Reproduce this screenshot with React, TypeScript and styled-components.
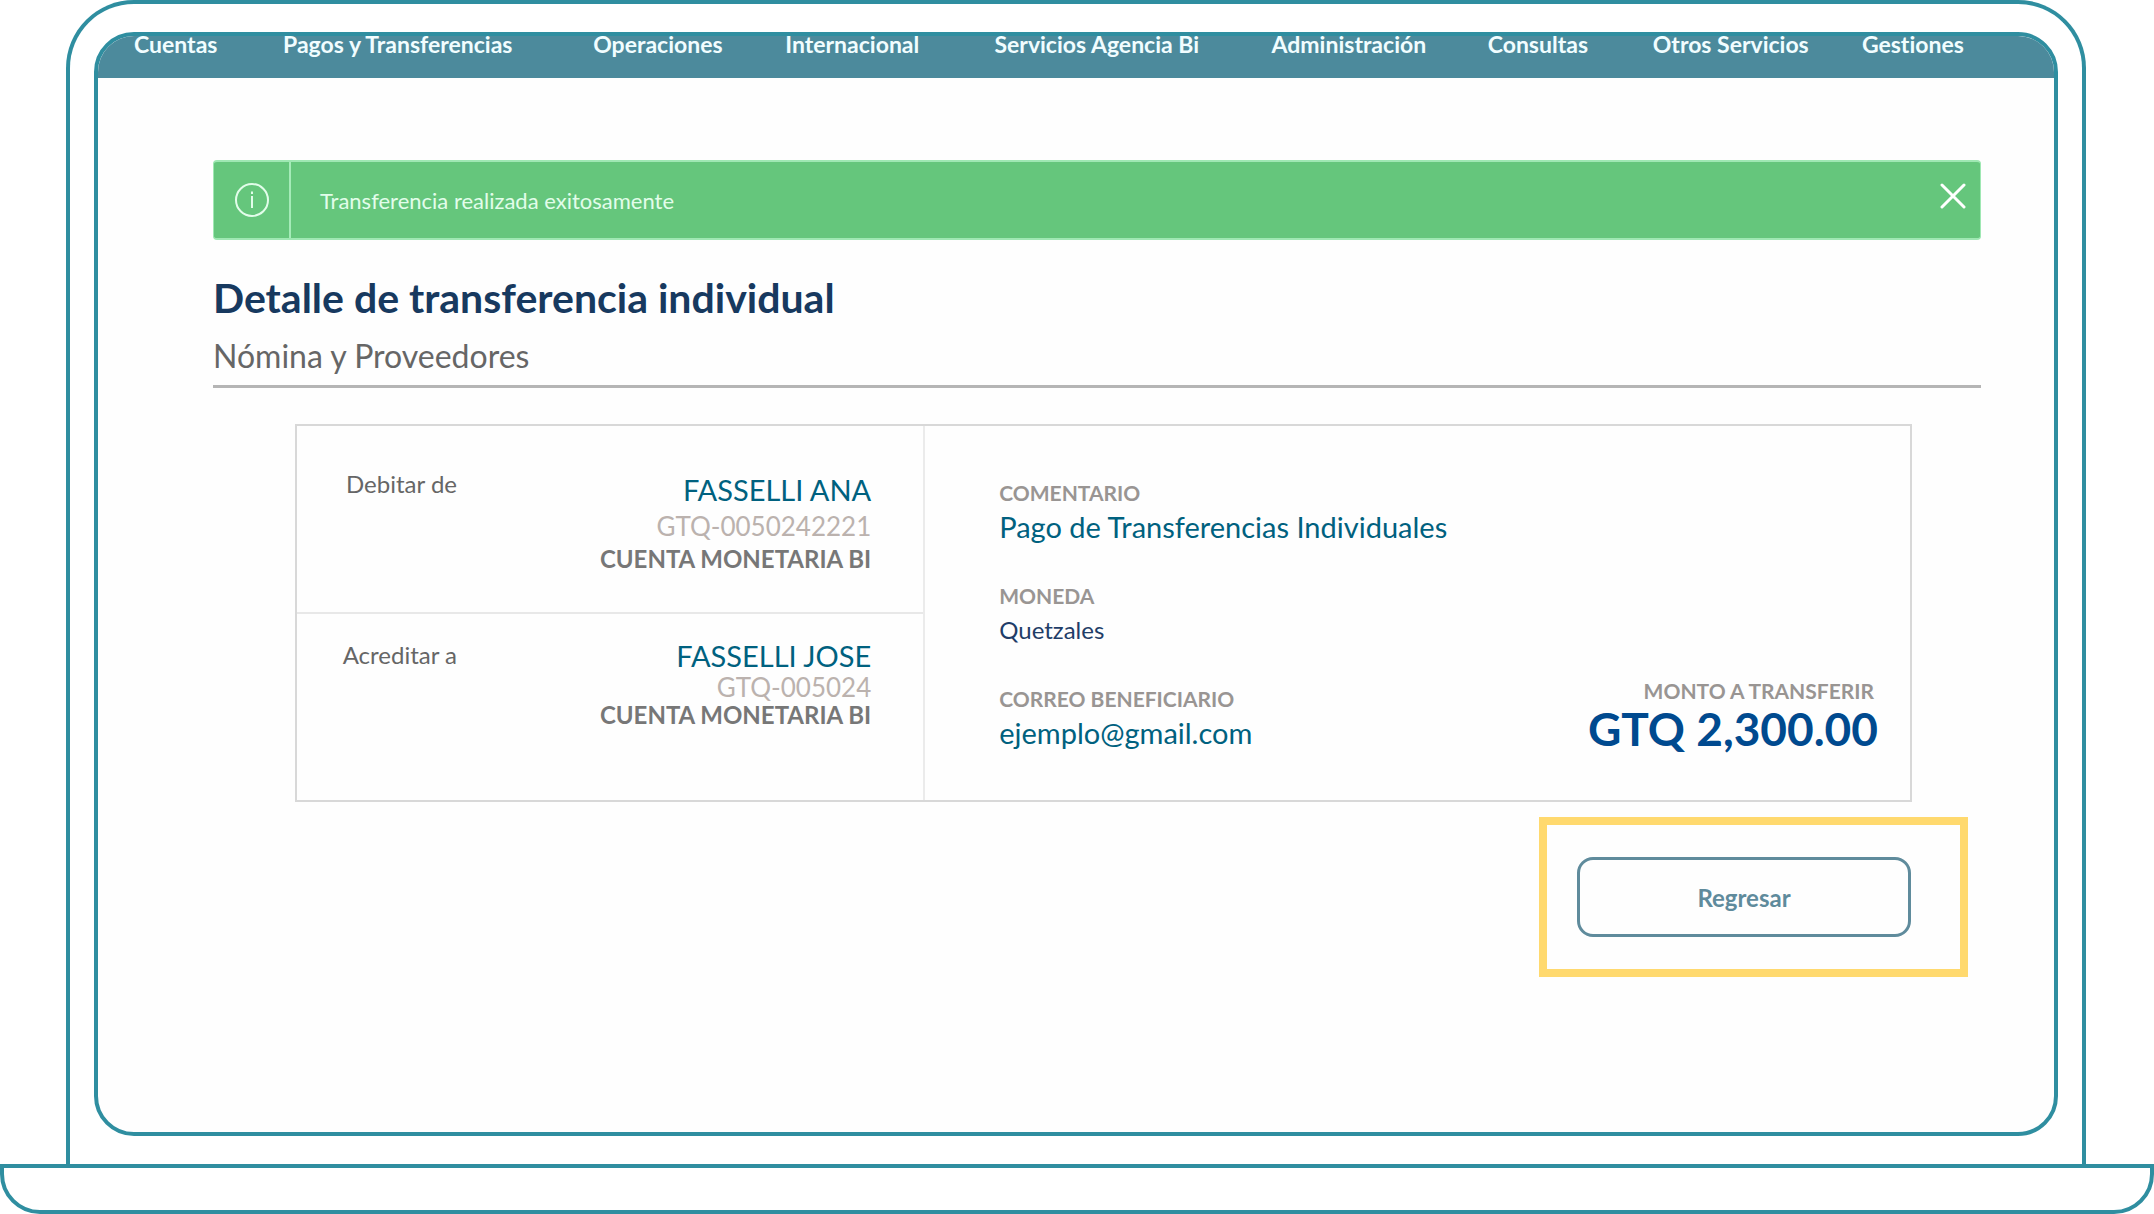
import React, { useState } from "react";
import styled, { createGlobalStyle } from "styled-components";

const teal = "#2f8ea0";

const GlobalStyle = createGlobalStyle`
  *, *::before, *::after { box-sizing: border-box; }
  body {
    margin: 0;
    background: #ffffff;
    font-family: Lato, "Open Sans", sans-serif;
  }
`;

const Laptop = styled.div`
  display: flex;
  flex-direction: column;
  min-height: 100vh;
`;

const Lid = styled.div`
  flex: 1;
  display: flex;
  margin: 0 68px 0 66px;
  padding: 28px 24px;
  border: 4px solid ${teal};
  border-bottom: 0;
  border-radius: 68px 68px 0 0;
`;

const Base = styled.div`
  height: 50px;
  border: 4px solid ${teal};
  border-radius: 0 0 40px 40px;
`;

const Screen = styled.div`
  flex: 1;
  min-width: 0;
  background: #fefefe;
  border: 4px solid ${teal};
  border-radius: 40px;
`;

const Nav = styled.nav`
  display: grid;
  grid-template-columns: 149fr 310fr 192fr 209fr 277fr 216fr 165fr 209fr 192fr;
  height: 42px;
  padding-left: 36px;
  background: #4c8a9c;
  border-radius: 36px 36px 0 0;
`;

const NavLink = styled.a`
  color: #f1fdff;
  font-size: 23px;
  font-weight: 700;
  font-variant-ligatures: none;
  line-height: 16px;
  text-decoration: none;
  white-space: nowrap;
`;

const Content = styled.main`
  padding: 82px 73px 0 115px;
`;

const Alert = styled.div`
  display: flex;
  align-items: stretch;
  height: 80px;
  color: #e2fdea;
  background: #65c67c;
  border: 2px solid #9fe8b3;
  border-left-width: 1px;
  border-right-width: 1px;
  border-radius: 4px;
`;

const AlertIcon = styled.div`
  display: flex;
  align-items: center;
  justify-content: center;
  width: 77px;
  border-right: 2px solid #a5ebb8;
`;

const AlertText = styled.p`
  flex: 1;
  margin: 0;
  padding-left: 29px;
  font-size: 22px;
  line-height: 78px;
`;

const CloseButton = styled.button`
  align-self: flex-start;
  display: flex;
  margin: 17px 10px 0 0;
  padding: 4px;
  color: #ffffff;
  background: none;
  border: 0;
  cursor: pointer;
`;

const Title = styled.h1`
  margin: 34px 0 0;
  color: #17395f;
  font-size: 41px;
  font-weight: 700;
  line-height: 48px;
`;

const Subtitle = styled.p`
  margin: 0;
  padding: 16px 0 11px;
  color: #666666;
  border-bottom: 3px solid #b5b5b5;
  font-size: 32px;
  line-height: 36px;
`;

const Card = styled.section`
  display: grid;
  grid-template-columns: 629fr 986fr;
  margin: 36px 69px 0 82px;
  border: 2px solid #d8d8d8;
`;

const Accounts = styled.div`
  display: grid;
  grid-template-rows: minmax(186px, 186fr) minmax(188px, 188fr);
  border-right: 2px solid #ebebeb;
`;

const Account = styled.div<{ $top: number }>`
  display: flex;
  align-items: flex-start;
  justify-content: space-between;
  padding: ${(p) => p.$top}px 52px 0 0;

  & + & { border-top: 2px solid #e8e8e8; }
`;

const AccountLabel = styled.h2`
  width: 160px;
  margin: 0;
  color: #666666;
  font-size: 24px;
  font-weight: 400;
  line-height: 30px;
  text-align: right;
`;

const AccountInfo = styled.div<{ $gap: number }>`
  display: grid;
  gap: ${(p) => p.$gap}px;
  padding-top: ${(p) => p.$gap - 1}px;
  text-align: right;
`;

const Holder = styled.strong`
  color: #00617f;
  font-size: 29px;
  font-weight: 400;
  line-height: 30px;
`;

const AccountNumber = styled.span`
  color: #bbb2ae;
  font-size: 26px;
  line-height: 28px;
`;

const AccountType = styled.span`
  color: #777777;
  font-size: 24px;
  font-weight: 700;
  line-height: 24px;
`;

const Details = styled.div`
  display: flex;
  justify-content: space-between;
  padding: 55px 32px 45px 74px;
`;

const FieldList = styled.dl`
  display: flex;
  flex-direction: column;
  gap: 40px;
  margin: 0;
`;

const Field = styled.div`
  display: grid;
  gap: 5px;
`;

const FieldLabel = styled.dt`
  color: #999593;
  font-size: 21px;
  font-weight: 700;
  line-height: 24px;
`;

const FieldValue = styled.dd<{ $small?: boolean }>`
  margin: 0;
  color: ${(p) => (p.$small ? "#1f3d68" : "#00617f")};
  font-size: ${(p) => (p.$small ? 24 : 29)}px;
  line-height: 34px;
`;

const Total = styled.dl`
  align-self: flex-end;
  margin: 0;
  text-align: right;
`;

const TotalLabel = styled(FieldLabel)`
  padding-right: 4px;
`;

const TotalValue = styled.dd`
  margin: 0;
  color: #004a8f;
  font-size: 46px;
  font-weight: 700;
  line-height: 52px;
`;

const Highlight = styled.div`
  width: 429px;
  margin: 15px 13px 0 auto;
  padding: 32px 49px 32px 30px;
  border: 8px solid #ffd96e;
`;

const BackButton = styled.button`
  display: block;
  width: 100%;
  height: 80px;
  color: #5f8b9c;
  background: transparent;
  border: 3px solid #5f8b9c;
  border-radius: 16px;
  font-family: inherit;
  font-size: 24px;
  font-weight: 700;
  cursor: pointer;
`;

const sections = [
  "Cuentas",
  "Pagos y Transferencias",
  "Operaciones",
  "Internacional",
  "Servicios Agencia Bi",
  "Administración",
  "Consultas",
  "Otros Servicios",
  "Gestiones",
];

const accounts = [
  { label: "Debitar de", holder: "FASSELLI ANA", number: "GTQ-0050242221", type: "CUENTA MONETARIA BI", top: 43, gap: 7 },
  { label: "Acreditar a", holder: "FASSELLI JOSE", number: "GTQ-005024", type: "CUENTA MONETARIA BI", top: 26, gap: 2 },
];

const fields = [
  { label: "COMENTARIO", value: "Pago de Transferencias Individuales" },
  { label: "MONEDA", value: "Quetzales", small: true },
  { label: "CORREO BENEFICIARIO", value: "ejemplo@gmail.com" },
];

function InfoIcon() {
  return (
    <svg width="36" height="36" viewBox="0 0 36 36" fill="none" stroke="currentColor" strokeWidth="2" aria-hidden="true">
      <circle cx="18" cy="18" r="16" />
      <path d="M18 14v12M18 9.5v2.5" />
    </svg>
  );
}

function CloseIcon() {
  return (
    <svg width="26" height="26" viewBox="0 0 26 26" fill="none" stroke="currentColor" strokeWidth="3" strokeLinecap="round" aria-hidden="true">
      <path d="M2 2l22 22M24 2L2 24" />
    </svg>
  );
}

export default function App() {
  const [alertOpen, setAlertOpen] = useState(true);

  return (
    <>
      <GlobalStyle />
      <Laptop>
        <Lid>
          <Screen>
            <Nav>
              {sections.map((name) => (
                <NavLink key={name} href="#">{name}</NavLink>
              ))}
            </Nav>
            <Content>
              {alertOpen && (
                <Alert role="status">
                  <AlertIcon><InfoIcon /></AlertIcon>
                  <AlertText>Transferencia realizada exitosamente</AlertText>
                  <CloseButton type="button" aria-label="Cerrar" onClick={() => setAlertOpen(false)}>
                    <CloseIcon />
                  </CloseButton>
                </Alert>
              )}
              <Title>Detalle de transferencia individual</Title>
              <Subtitle>Nómina y Proveedores</Subtitle>
              <Card>
                <Accounts>
                  {accounts.map((a) => (
                    <Account key={a.label} $top={a.top}>
                      <AccountLabel>{a.label}</AccountLabel>
                      <AccountInfo $gap={a.gap}>
                        <Holder>{a.holder}</Holder>
                        <AccountNumber>{a.number}</AccountNumber>
                        <AccountType>{a.type}</AccountType>
                      </AccountInfo>
                    </Account>
                  ))}
                </Accounts>
                <Details>
                  <FieldList>
                    {fields.map((f) => (
                      <Field key={f.label}>
                        <FieldLabel>{f.label}</FieldLabel>
                        <FieldValue $small={f.small}>{f.value}</FieldValue>
                      </Field>
                    ))}
                  </FieldList>
                  <Total>
                    <TotalLabel>MONTO A TRANSFERIR</TotalLabel>
                    <TotalValue>GTQ 2,300.00</TotalValue>
                  </Total>
                </Details>
              </Card>
              <Highlight>
                <BackButton type="button">Regresar</BackButton>
              </Highlight>
            </Content>
          </Screen>
        </Lid>
        <Base />
      </Laptop>
    </>
  );
}
